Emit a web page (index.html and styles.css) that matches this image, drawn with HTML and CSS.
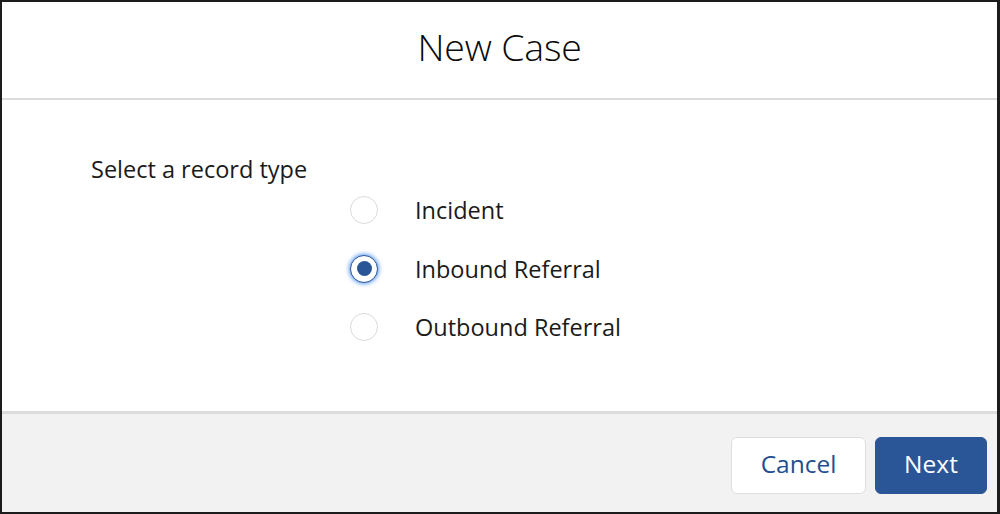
FILE: index.html
```html
<!DOCTYPE html>
<html>
<head>
<meta charset="utf-8">
<link rel="stylesheet" href="styles.css">
</head>
<body>
<div class="frame">
  <header class="header"><h1 class="title">New Case</h1></header>
  <main class="content">
    <div class="group-label">Select a record type</div>
    <div class="options">
      <label class="option"><span class="radio"></span><span class="opt-text">Incident</span></label>
      <label class="option"><span class="radio checked"></span><span class="opt-text">Inbound Referral</span></label>
      <label class="option"><span class="radio"></span><span class="opt-text">Outbound Referral</span></label>
    </div>
  </main>
  <footer class="footer">
    <button class="btn btn-neutral">Cancel</button>
    <button class="btn btn-brand">Next</button>
  </footer>
</div>
</body>
</html>
```
FILE: styles.css
```css
* { box-sizing: border-box; }
html, body { margin: 0; padding: 0; }
body { width: 1000px; height: 514px; overflow: hidden; font-family: "Open Sans", "Noto Sans", sans-serif; background: #fff; }
.frame {
  width: 1000px; height: 514px;
  border: 2px solid #1c1c1c;
  border-right-width: 3px;
  display: flex; flex-direction: column;
  background: #fff;
}
.header {
  height: 98px;
  border-bottom: 2px solid #dcdcdc;
  display: flex; align-items: flex-start; justify-content: center;
  padding-top: 22px;
}
.title {
  margin: 0;
  font-weight: 300;
  font-size: 37.5px;
  line-height: 46px;
  color: #0a0a0a;
  letter-spacing: -0.2px;
}
.content {
  flex: 1;
  padding: 54px 0 0 89px;
}
.group-label {
  font-size: 23.5px;
  line-height: 30px;
  color: #1a1a1a;
}
.options {
  padding-left: 259px;
  display: flex; flex-direction: column;
  margin-top: -3px;
}
.option {
  display: flex; align-items: center;
  height: 58.5px;
}
.radio {
  width: 28px; height: 28px;
  border-radius: 50%;
  border: 1.5px solid #dadada;
  background: #fff;
  flex: none;
  display: flex; align-items: center; justify-content: center;
}
.radio.checked {
  border: 1.5px solid #2a5597;
  box-shadow: 0 0 4px 1px #5b9bf0;
}
.radio.checked::after {
  content: "";
  width: 15px; height: 15px; border-radius: 50%;
  background: #2a5597;
}
.opt-text {
  margin-left: 37px;
  font-size: 23.5px;
  color: #1a1a1a;
}
.footer {
  height: 101px;
  border-top: 3px solid #dcdcdc;
  background: #f2f2f2;
  display: flex; justify-content: flex-end; align-items: flex-start;
  padding: 23px 10px 0 0;
  gap: 9px;
}
.btn {
  height: 57px;
  border-radius: 6px;
  font-family: "Open Sans", "Noto Sans", sans-serif;
  font-size: 24.5px;
  padding: 0 0 5px 0;
  cursor: pointer;
}
.btn-neutral {
  width: 135px;
  background: #fff;
  border: 1px solid #dedede;
  color: #1f4f8f;
}
.btn-brand {
  width: 112px;
  background: #2a5597;
  border: 1px solid #2a5597;
  color: #fff;
}
```
